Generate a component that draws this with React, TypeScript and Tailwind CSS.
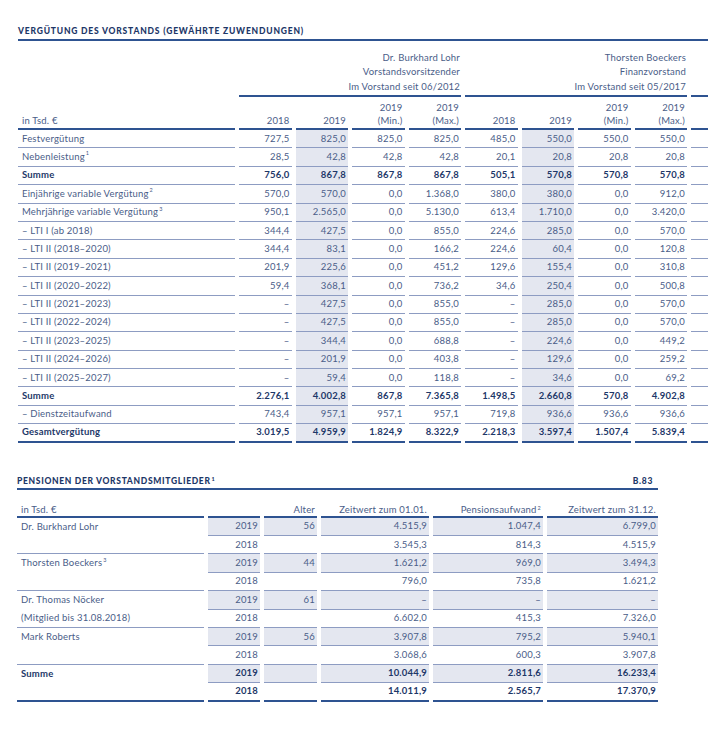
type Row = { label: string; sup?: string; v: string[]; bold?: boolean };

const rows1: Row[] = [
  { label: "Festvergütung", v: ["727,5", "825,0", "825,0", "825,0", "485,0", "550,0", "550,0", "550,0"] },
  { label: "Nebenleistung", sup: "1", v: ["28,5", "42,8", "42,8", "42,8", "20,1", "20,8", "20,8", "20,8"] },
  { label: "Summe", bold: true, v: ["756,0", "867,8", "867,8", "867,8", "505,1", "570,8", "570,8", "570,8"] },
  { label: "Einjährige variable Vergütung", sup: "2", v: ["570,0", "570,0", "0,0", "1.368,0", "380,0", "380,0", "0,0", "912,0"] },
  { label: "Mehrjährige variable Vergütung", sup: "3", v: ["950,1", "2.565,0", "0,0", "5.130,0", "613,4", "1.710,0", "0,0", "3.420,0"] },
  { label: "– LTI I (ab 2018)", v: ["344,4", "427,5", "0,0", "855,0", "224,6", "285,0", "0,0", "570,0"] },
  { label: "– LTI II (2018–2020)", v: ["344,4", "83,1", "0,0", "166,2", "224,6", "60,4", "0,0", "120,8"] },
  { label: "– LTI II (2019–2021)", v: ["201,9", "225,6", "0,0", "451,2", "129,6", "155,4", "0,0", "310,8"] },
  { label: "– LTI II (2020–2022)", v: ["59,4", "368,1", "0,0", "736,2", "34,6", "250,4", "0,0", "500,8"] },
  { label: "– LTI II (2021–2023)", v: ["–", "427,5", "0,0", "855,0", "–", "285,0", "0,0", "570,0"] },
  { label: "– LTI II (2022–2024)", v: ["–", "427,5", "0,0", "855,0", "–", "285,0", "0,0", "570,0"] },
  { label: "– LTI II (2023–2025)", v: ["–", "344,4", "0,0", "688,8", "–", "224,6", "0,0", "449,2"] },
  { label: "– LTI II (2024–2026)", v: ["–", "201,9", "0,0", "403,8", "–", "129,6", "0,0", "259,2"] },
  { label: "– LTI II (2025–2027)", v: ["–", "59,4", "0,0", "118,8", "–", "34,6", "0,0", "69,2"] },
  { label: "Summe", bold: true, v: ["2.276,1", "4.002,8", "867,8", "7.365,8", "1.498,5", "2.660,8", "570,8", "4.902,8"] },
  { label: "– Dienstzeitaufwand", v: ["743,4", "957,1", "957,1", "957,1", "719,8", "936,6", "936,6", "936,6"] },
  { label: "Gesamtvergütung", bold: true, v: ["3.019,5", "4.959,9", "1.824,9", "8.322,9", "2.218,3", "3.597,4", "1.507,4", "5.839,4"] },
];

type PRow = { label: string; sup?: string; year: string; v: string[]; bold?: boolean };

const rows2: PRow[] = [
  { label: "Dr. Burkhard Lohr", year: "2019", v: ["56", "4.515,9", "1.047,4", "6.799,0"] },
  { label: "", year: "2018", v: ["", "3.545,3", "814,3", "4.515,9"] },
  { label: "Thorsten Boeckers", sup: "3", year: "2019", v: ["44", "1.621,2", "969,0", "3.494,3"] },
  { label: "", year: "2018", v: ["", "796,0", "735,8", "1.621,2"] },
  { label: "Dr. Thomas Nöcker", year: "2019", v: ["61", "–", "–", "–"] },
  { label: "(Mitglied bis 31.08.2018)", year: "2018", v: ["", "6.602,0", "415,3", "7.326,0"] },
  { label: "Mark Roberts", year: "2019", v: ["56", "3.907,8", "795,2", "5.940,1"] },
  { label: "", year: "2018", v: ["", "3.068,6", "600,3", "3.907,8"] },
  { label: "Summe", bold: true, year: "2019", v: ["", "10.044,9", "2.811,6", "16.233,4"] },
  { label: "", bold: true, year: "2018", v: ["", "14.011,9", "2.565,7", "17.370,9"] },
];

const Sup = ({ n }: { n?: string }) =>
  n ? <span className="text-[5.5px] leading-none relative -top-[3px] ml-px">{n}</span> : null;

const VorstandTable = () => {
  return (
    <div className="ml-px grid grid-cols-[217px_repeat(8,52.5px)_17px] gap-x-1 text-[9.5px] tracking-[0.02em] text-[#4a5d88]">
      <div className="col-span-10 border-b-2 border-[#2e5391] pb-[2px] text-[8.5px] leading-[12px] font-black tracking-[0.095em] text-[#1d3768]">
        VERGÜTUNG DES VORSTANDS (GEWÄHRTE ZUWENDUNGEN)
      </div>

      {/* names */}
      <div className="h-[56px]" />
      <div className="col-span-4 h-[56px] border-b-2 border-[#2e5391] flex flex-col justify-end items-end pb-[1px] pr-[1px] leading-[14.5px]">
        <span>Dr. Burkhard Lohr</span>
        <span>Vorstandsvorsitzender</span>
        <span>Im Vorstand seit 06/2012</span>
      </div>
      <div className="col-span-4 h-[56px] border-b-2 border-[#2e5391] flex flex-col justify-end items-end pb-[1px] pr-[1px] leading-[14.5px]">
        <span>Thorsten Boeckers</span>
        <span>Finanzvorstand</span>
        <span>Im Vorstand seit 05/2017</span>
      </div>
      <div className="h-[56px] border-b-2 border-[#2e5391]" />

      {/* years */}
      <div className="h-[33px] border-b-2 border-[#2e5391] flex items-end pl-1 pb-px leading-[13px]">in Tsd. €</div>
      {[["2018"], ["2019"], ["2019", "(Min.)"], ["2019", "(Max.)"], ["2018"], ["2019"], ["2019", "(Min.)"], ["2019", "(Max.)"]].map((h, i) => (
        <div key={i} className="h-[33px] border-b-2 border-[#2e5391] flex flex-col justify-end items-end pr-[2px] pb-px leading-[13px]">
          {h.map((t) => (
            <span key={t}>{t}</span>
          ))}
        </div>
      ))}
      <div className="h-[33px] border-b-2 border-[#2e5391]" />

      {rows1.map((r, ri) => {
        const last = ri === rows1.length - 1;
        const line = last ? "border-b-2 border-[#2e5391]" : "border-b border-[#8d9cc2]";
        const txt = r.bold ? "font-bold text-[#1d3768]" : "";
        return [
          <div key={ri + "l"} className={`h-[18.4px] flex items-center pl-1 whitespace-nowrap ${line} ${txt}`}>
            {r.label}
            <Sup n={r.sup} />
          </div>,
          ...r.v.map((v, i) => (
            <div
              key={ri + "v" + i}
              className={`h-[18.4px] flex items-center justify-end pr-[2px] ${line} ${txt} ${i === 1 || i === 5 ? "bg-[#e4e7f0]" : ""}`}
            >
              {v}
            </div>
          )),
          <div key={ri + "s"} className={`h-[18.4px] ${line}`} />,
        ];
      })}
    </div>
  );
};

const PensionTable = () => {
  return (
    <div className="mt-[32px] grid grid-cols-[187px_52px_53px_108px_110px_111px] gap-x-1 text-[9.5px] tracking-[0.02em] text-[#4a5d88]">
      <div className="col-span-6 flex justify-between border-b-2 border-[#2e5391] pb-px text-[8.5px] leading-[12px] font-black tracking-[0.08em] text-[#1d3768]">
        <span>
          PENSIONEN DER VORSTANDSMITGLIEDER
          <span className="text-[5.5px] leading-none relative -top-[3px] ml-px">1</span>
        </span>
        <span className="pr-[5px]">B.83</span>
      </div>

      <div className="h-[28px] border-b-2 border-[#2e5391] flex items-end pl-1 leading-[13px]">in Tsd. €</div>
      <div className="h-[28px] border-b-2 border-[#2e5391]" />
      <div className="h-[28px] border-b-2 border-[#2e5391] flex items-end justify-end pr-[2px] leading-[13px]">Alter</div>
      <div className="h-[28px] border-b-2 border-[#2e5391] flex items-end justify-end pr-[2px] leading-[13px]">Zeitwert zum 01.01.</div>
      <div className="h-[28px] border-b-2 border-[#2e5391] flex items-end justify-end pr-[2px] leading-[13px]">
        <span>
          Pensionsaufwand
          <Sup n="2" />
        </span>
      </div>
      <div className="h-[28px] border-b-2 border-[#2e5391] flex items-end justify-end pr-[2px] leading-[13px]">Zeitwert zum 31.12.</div>

      {rows2.map((r, ri) => {
        const last = ri === rows2.length - 1;
        const line = last ? "border-b-2 border-[#2e5391]" : "border-b border-[#8d9cc2]";
        const labelLine = r.year === "2018" ? line : "";
        const shade = r.year === "2019" ? "bg-[#e4e7f0]" : "";
        const txt = r.bold ? "font-bold text-[#1d3768]" : "";
        return [
          <div key={ri + "l"} className={`h-[18.4px] flex items-center pl-1 whitespace-nowrap ${labelLine} ${txt}`}>
            {r.label}
            <Sup n={r.sup} />
          </div>,
          <div key={ri + "y"} className={`h-[18.4px] flex items-center justify-end pr-[2px] ${line} ${shade} ${txt}`}>
            {r.year}
          </div>,
          ...r.v.map((v, i) => (
            <div key={ri + "v" + i} className={`h-[18.4px] flex items-center justify-end pr-[2px] ${line} ${shade} ${txt}`}>
              {v}
            </div>
          )),
        ];
      })}
    </div>
  );
};

export default function App() {
  return (
    <div className="w-[724px] min-h-[744px] bg-white pt-[25px] pl-[17px] font-['Lato','Open_Sans',sans-serif]">
      <VorstandTable />
      <PensionTable />
    </div>
  );
}
